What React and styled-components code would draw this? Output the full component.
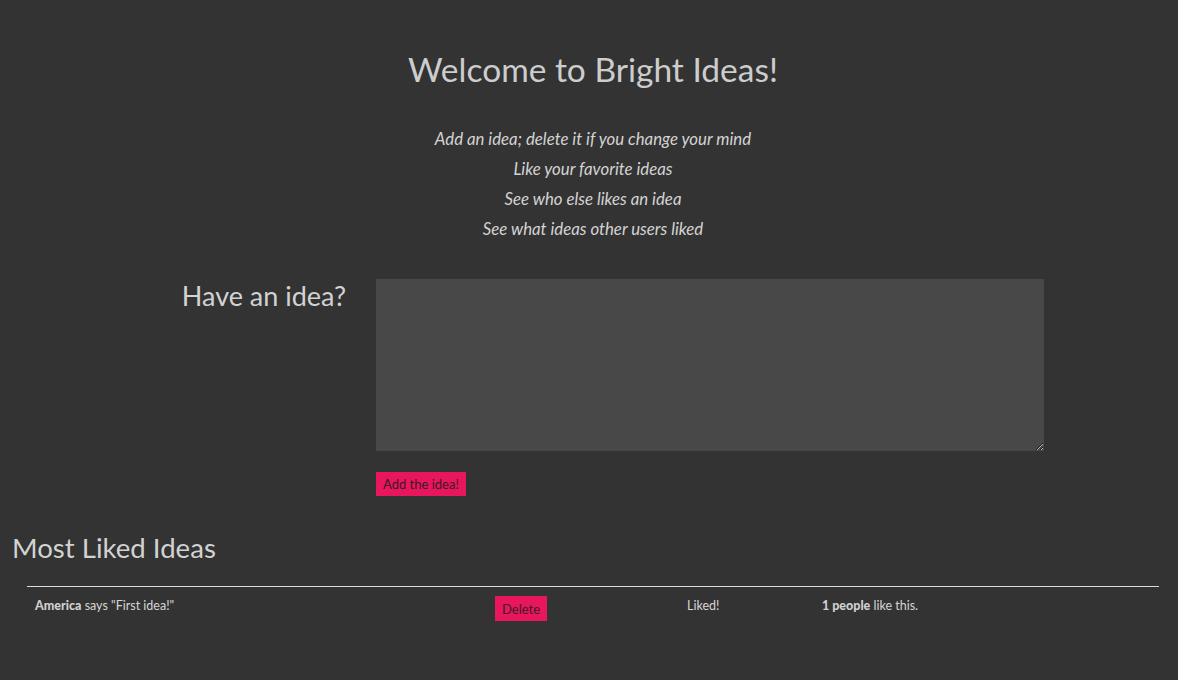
import React from "react";
import styled, { createGlobalStyle } from "styled-components";

const GlobalStyle = createGlobalStyle`
  html, body {
    margin: 0;
    padding: 0;
    background: #333333;
  }
  body {
    font-family: "Lato", "Open Sans", sans-serif;
    color: #cfcfcf;
  }
`;

const Page = styled.div`
  width: 1178px;
  min-height: 680px;
  padding-top: 47px;
  box-sizing: border-box;
`;

const Title = styled.h1`
  margin: 0 0 0 8px;
  text-align: center;
  font-size: 33.5px;
  font-weight: 400;
  line-height: 44px;
  color: #cdcdcd;
`;

const Features = styled.ul`
  list-style: none;
  margin: 33px 0 0 8px;
  padding: 0;
  text-align: center;
`;

const Feature = styled.li`
  font-size: 16.8px;
  font-style: italic;
  line-height: 30px;
  color: #d4d4d4;
`;

const IdeaForm = styled.form`
  display: grid;
  grid-template-columns: 346px 668px;
  column-gap: 30px;
  row-gap: 21px;
  margin-top: 35px;
`;

const FormLabel = styled.h2`
  margin: 0;
  text-align: right;
  font-size: 27px;
  font-weight: 400;
  line-height: 34px;
  color: #d2d2d2;
`;

const IdeaInput = styled.textarea`
  display: block;
  width: 668px;
  height: 172px;
  box-sizing: border-box;
  border: none;
  background: #484848;
  color: #ddd;
  font-family: inherit;
  font-size: 15px;
  padding: 6px;
  outline: none;
`;

const PinkButton = styled.button`
  background: #e8175d;
  color: #3a1a26;
  border: none;
  border-radius: 0;
  font-family: "Lato", sans-serif;
  font-size: 13px;
  line-height: 16px;
  padding: ${(p) => p.$pad || "4px 7px"};
  cursor: pointer;
  justify-self: start;
`;

const SectionTitle = styled.h2`
  margin: 35px 0 0 12px;
  font-size: 27.6px;
  font-weight: 400;
  line-height: 34px;
  color: #d2d2d2;
`;

const IdeaTable = styled.div`
  margin: 21px 19px 0 27px;
  border-top: 1px solid #dcdcdc;
`;

const IdeaRow = styled.div`
  display: grid;
  grid-template-columns: 460px 192px 135px 1fr;
  align-items: start;
  padding: 9px 0 0 8px;
`;

const Cell = styled.div`
  font-size: 12.5px;
  line-height: 18px;
  color: #d6d6d6;
  padding-top: 1px;
`;

const Strong = styled.b`
  font-weight: 900;
  color: #cfcfcf;
`;

const ideas = [
  { id: 1, author: "America", text: "First idea!", likes: 1 },
];

export default function App() {
  return (
    <>
      <GlobalStyle />
      <Page>
        <Title>Welcome to Bright Ideas!</Title>
        <Features>
          <Feature>Add an idea; delete it if you change your mind</Feature>
          <Feature>Like your favorite ideas</Feature>
          <Feature>See who else likes an idea</Feature>
          <Feature>See what ideas other users liked</Feature>
        </Features>
        <IdeaForm onSubmit={(e) => e.preventDefault()}>
          <FormLabel>Have an idea?</FormLabel>
          <IdeaInput />
          <span />
          <PinkButton type="submit">Add the idea!</PinkButton>
        </IdeaForm>
        <SectionTitle>Most Liked Ideas</SectionTitle>
        <IdeaTable>
          {ideas.map((idea) => (
            <IdeaRow key={idea.id}>
              <Cell>
                <Strong>{idea.author}</Strong> says "{idea.text}"
              </Cell>
              <PinkButton type="button" $pad="5px 7px 4px">
                Delete
              </PinkButton>
              <Cell>Liked!</Cell>
              <Cell>
                <Strong>{idea.likes} people</Strong> like this.
              </Cell>
            </IdeaRow>
          ))}
        </IdeaTable>
      </Page>
    </>
  );
}
